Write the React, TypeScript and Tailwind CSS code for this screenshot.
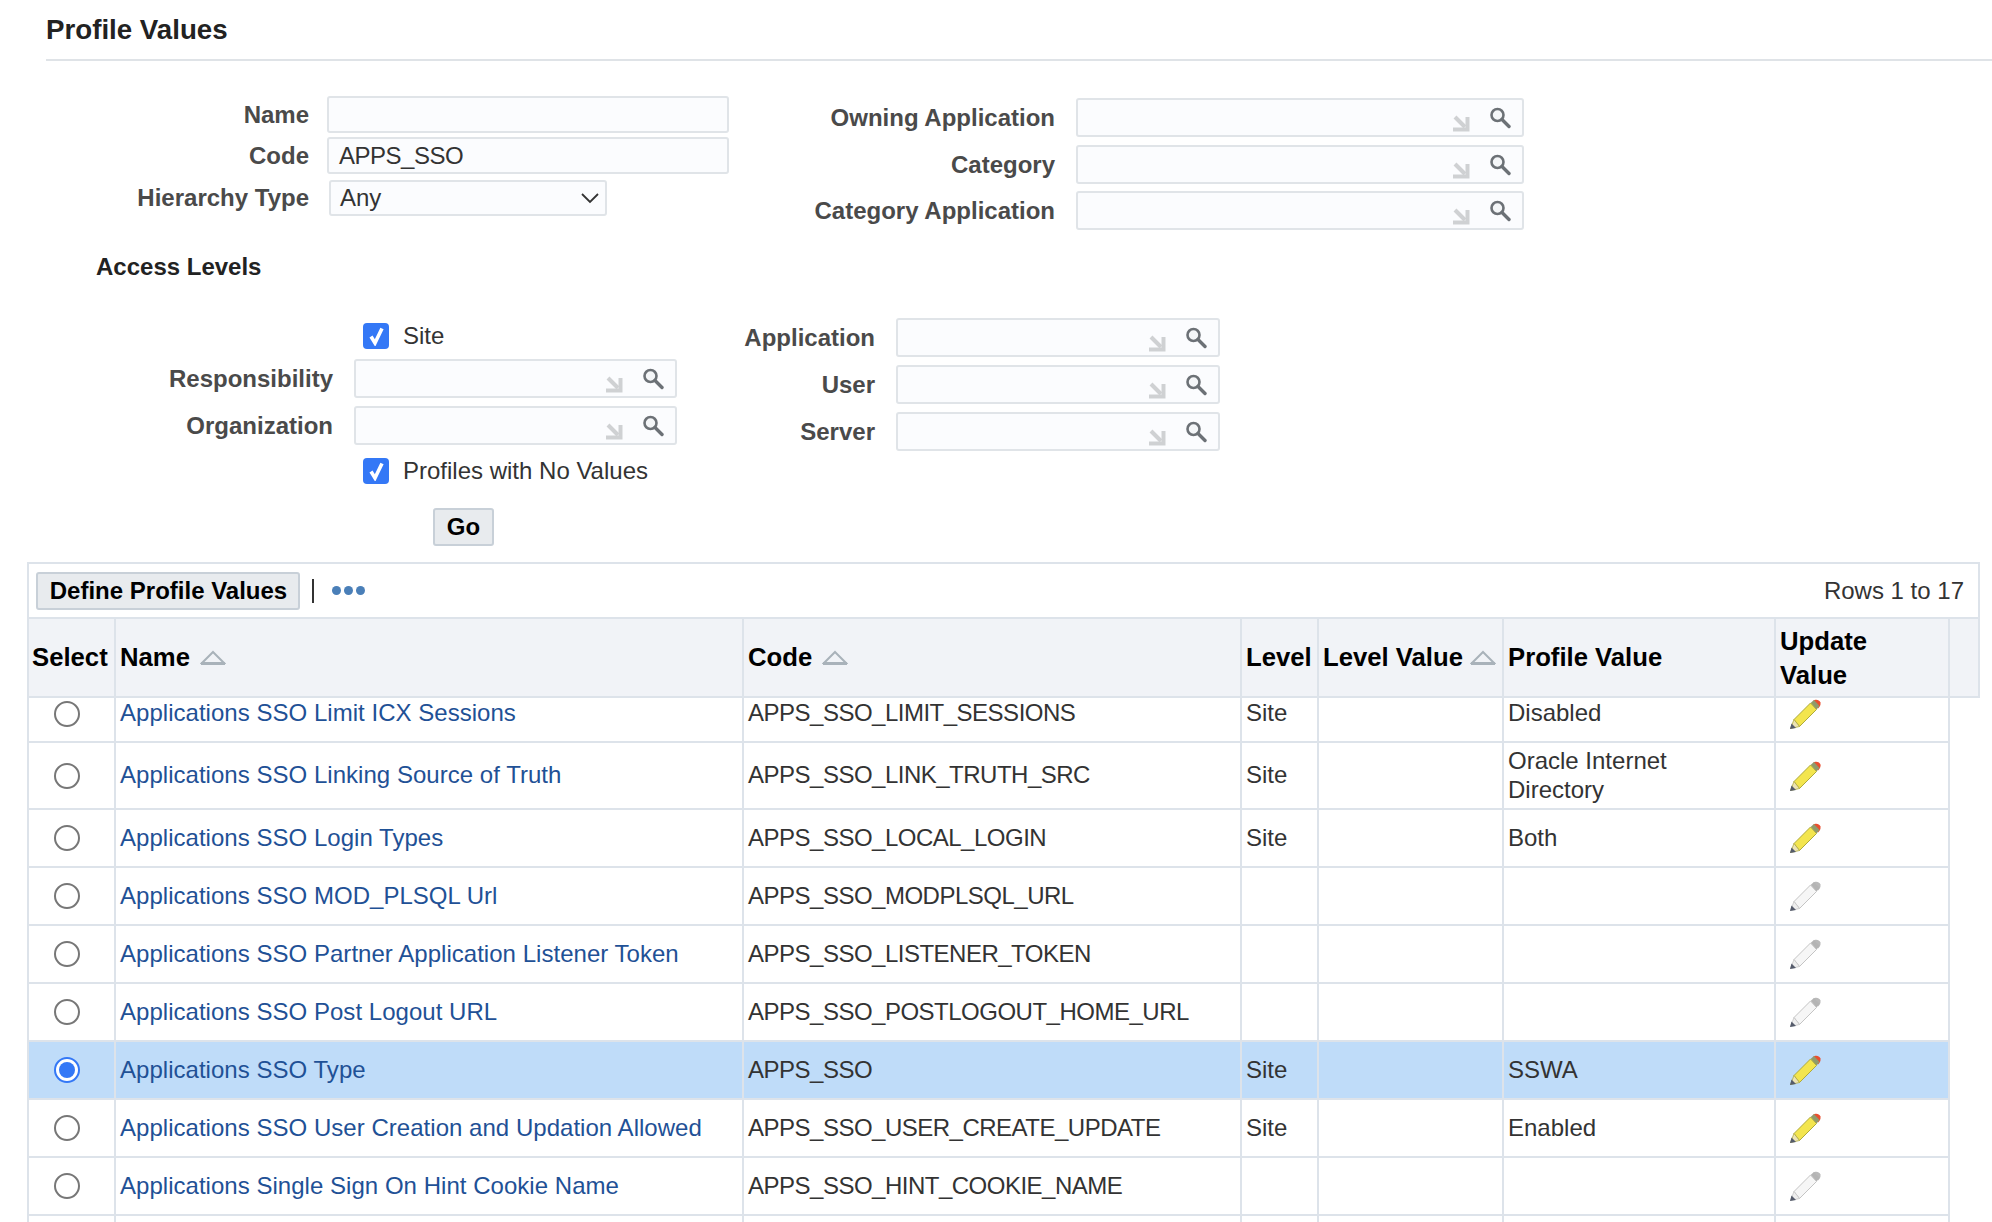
import * as React from "react";

const rows = [
  { name: "Applications SSO Limit ICX Sessions", code: "APPS_SSO_LIMIT_SESSIONS", level: "Site", value: "Disabled", active: true, h: "h-[45px]", shift: "pb-[15px]" },
  { name: "Applications SSO Linking Source of Truth", code: "APPS_SSO_LINK_TRUTH_SRC", level: "Site", value: "Oracle Internet Directory", active: true, h: "h-[67px]" },
  { name: "Applications SSO Login Types", code: "APPS_SSO_LOCAL_LOGIN", level: "Site", value: "Both", active: true, h: "h-[58px]" },
  { name: "Applications SSO MOD_PLSQL Url", code: "APPS_SSO_MODPLSQL_URL", level: "", value: "", active: false, h: "h-[58px]" },
  { name: "Applications SSO Partner Application Listener Token", code: "APPS_SSO_LISTENER_TOKEN", level: "", value: "", active: false, h: "h-[58px]" },
  { name: "Applications SSO Post Logout URL", code: "APPS_SSO_POSTLOGOUT_HOME_URL", level: "", value: "", active: false, h: "h-[58px]" },
  { name: "Applications SSO Type", code: "APPS_SSO", level: "Site", value: "SSWA", active: true, h: "h-[58px]", selected: true },
  { name: "Applications SSO User Creation and Updation Allowed", code: "APPS_SSO_USER_CREATE_UPDATE", level: "Site", value: "Enabled", active: true, h: "h-[58px]" },
  { name: "Applications Single Sign On Hint Cookie Name", code: "APPS_SSO_HINT_COOKIE_NAME", level: "", value: "", active: false, h: "h-[58px]" },
  { name: "", code: "", level: "", value: "", active: false, h: "h-[58px]", empty: true },
];

const gridCols = "grid grid-cols-[87px_628px_498px_77px_185px_272px_174px]";

function LovIcons() {
  return (
    <div className="absolute right-[11px] top-[7px] flex items-start gap-[18px]">
      <svg width="20" height="18" viewBox="0 0 20 18" className="mt-[7px]">
        <path d="M4 3 L14 13" stroke="#cfd1d3" strokeWidth="4" fill="none" />
        <path d="M2 15.5 H16.5 V3" stroke="#cfd1d3" strokeWidth="4" fill="none" />
      </svg>
      <svg width="22" height="22" viewBox="0 0 22 22">
        <circle cx="8.5" cy="8" r="6" stroke="#6c7176" strokeWidth="2.6" fill="#f4f6f8" />
        <path d="M13 12.5 L20 19.5" stroke="#6c7176" strokeWidth="3.4" strokeLinecap="round" />
      </svg>
    </div>
  );
}

function LovField({ label, labelWidth, width, mb }: { label: string; labelWidth: string; width: string; mb?: string }) {
  return (
    <div className={`flex items-center ${mb ?? ""}`}>
      <span className={`${labelWidth} shrink-0 text-right text-[24px] font-bold text-[#4a4a4a]`}>{label}</span>
      <div className={`relative ml-[21px] h-[39px] ${width} shrink-0 rounded-[3px] border-2 border-[#e0e4e8] bg-[#fbfcfe]`}>
        <LovIcons />
      </div>
    </div>
  );
}

function TextRow({ label, value, mb }: { label: string; value?: string; mb: string }) {
  return (
    <div className={`flex items-center ${mb}`}>
      <span className="w-[309px] shrink-0 text-right text-[24px] font-bold text-[#4a4a4a]">{label}</span>
      <div className="ml-[18px] flex h-[37px] w-[402px] items-center rounded-[3px] border-2 border-[#e0e4e8] bg-[#fbfcfe] pl-[10px] text-[24px] tracking-[-0.5px] text-[#333]">
        {value}
      </div>
    </div>
  );
}

function CheckRow({ label }: { label: string }) {
  return (
    <div className="ml-[363px] flex h-[26px] items-center">
      <span className="flex h-[26px] w-[26px] items-center justify-center rounded-[4px] bg-[#3478f6]">
        <svg width="17" height="20" viewBox="0 0 17 20">
          <path d="M3 10.5 L7 17 L14 2.5" stroke="#fff" strokeWidth="3.6" fill="none" />
        </svg>
      </span>
      <span className="ml-[14px] text-[24px] text-[#333]">{label}</span>
    </div>
  );
}

function Radio({ selected }: { selected?: boolean }) {
  return selected ? (
    <span className="ml-[25px] flex h-[26px] w-[26px] items-center justify-center rounded-full border-2 border-[#3478f6] bg-white">
      <span className="h-[16px] w-[16px] rounded-full bg-[#3478f6]" />
    </span>
  ) : (
    <span className="ml-[25px] block h-[26px] w-[26px] rounded-full border-2 border-[#777] bg-white" />
  );
}

function Pencil({ active }: { active: boolean }) {
  const body = active ? "#f3e54e" : "#f6f6f6";
  const edge = active ? "#aeaa3c" : "#c4c4c4";
  const band = active ? "#8f9a6c" : "#b4b4b4";
  const tip = active ? "#ece3b4" : "#eeeeee";
  const cap = active ? "#ea4f2f" : "#b9b9b9";
  return (
    <svg width="32" height="30" viewBox="0 0 32 30" className="ml-[13px] shrink-0">
      <path d="M24 2 C26 0 30 0 31.5 3.5 C32 6 30.5 8 29 9.5 Z" fill={cap} />
      <path d="M21.5 4 L25 1 L30.5 7 L27.5 10.5 Z" fill={band} />
      <path d="M5 20.5 L21.5 4 L27.5 10.5 L10.5 27.5 Z" fill={body} stroke={edge} strokeWidth="1" />
      <path d="M1.5 29.5 L5 20.5 L10.5 27.5 Z" fill={tip} stroke={edge} strokeWidth="0.8" />
      <path d="M1 30 L2.5 24.5 L7 29 Z" fill="#555b6b" />
    </svg>
  );
}

function SortTriangle({ gap }: { gap: string }) {
  return (
    <svg width="26" height="15" viewBox="0 0 26 15" className={`${gap} shrink-0`}>
      <path d="M13 2 L24 13 H2 Z" fill="none" stroke="#a9b2ba" strokeWidth="2" />
      <path d="M1 13.5 H25" stroke="#a9b2ba" strokeWidth="3" />
    </svg>
  );
}

function HeaderCell({ children, sortGap, className }: { children: React.ReactNode; sortGap?: string; className?: string }) {
  return (
    <div className={`flex items-center border-r-2 border-[#dde3ea] pl-[4px] text-[25.7px] font-bold text-black ${className ?? ""}`}>
      {children}
      {sortGap && <SortTriangle gap={sortGap} />}
    </div>
  );
}

function Cell({ children, link, selected, className }: { children?: React.ReactNode; link?: boolean; selected?: boolean; className?: string }) {
  return (
    <div className={`flex items-center border-r-2 border-[#dde3ea] pb-[2px] pl-[4px] text-[24px] leading-[29px] ${link ? "text-[#1f5196]" : "text-[#333]"} ${selected ? "bg-[#bfdcf9]" : ""} ${className ?? ""}`}>
      {children}
    </div>
  );
}

export default function App() {
  return (
    <div className="h-[1222px] w-[1992px] overflow-hidden bg-white font-['Liberation_Sans',Arial,sans-serif]">
      <div className="ml-[46px] flex h-[61px] items-center border-b-2 border-[#dfe3e7] pt-[1px] text-[27.7px] font-bold text-[#222]">
        Profile Values
      </div>

      <div className="flex pt-[35px]">
        <div className="w-[747px]">
          <TextRow label="Name" mb="mb-[4px]" />
          <TextRow label="Code" value="APPS_SSO" mb="mb-[6px]" />
          <div className="flex items-center">
            <span className="w-[309px] shrink-0 text-right text-[24px] font-bold text-[#4a4a4a]">Hierarchy Type</span>
            <div className="ml-[20px] flex h-[36px] w-[278px] items-center justify-between rounded-[3px] border-2 border-[#e0e4e8] bg-[#fbfcfe] pl-[9px] pr-[5px] text-[24px] text-[#333]">
              Any
              <svg width="20" height="12" viewBox="0 0 20 12">
                <path d="M2 2 L10 10 L18 2" stroke="#333" strokeWidth="1.8" fill="none" />
              </svg>
            </div>
          </div>
        </div>
        <div className="pt-[2px]">
          <LovField label="Owning Application" labelWidth="w-[308px]" width="w-[448px]" mb="mb-[8px]" />
          <LovField label="Category" labelWidth="w-[308px]" width="w-[448px]" mb="mb-[7px]" />
          <LovField label="Category Application" labelWidth="w-[308px]" width="w-[448px]" />
        </div>
      </div>

      <div className="ml-[96px] mt-[21px] text-[24px] font-bold leading-[32px] text-[#222]">Access Levels</div>

      <div className="mt-[35px] flex">
        <div className="w-[680px] pt-[5px]">
          <CheckRow label="Site" />
          <div className="mt-[10px]">
            <LovField label="Responsibility" labelWidth="w-[333px]" width="w-[323px]" mb="mb-[8px]" />
            <LovField label="Organization" labelWidth="w-[333px]" width="w-[323px]" mb="mb-[13px]" />
          </div>
          <CheckRow label="Profiles with No Values" />
        </div>
        <div>
          <LovField label="Application" labelWidth="w-[195px]" width="w-[324px]" mb="mb-[8px]" />
          <LovField label="User" labelWidth="w-[195px]" width="w-[324px]" mb="mb-[8px]" />
          <LovField label="Server" labelWidth="w-[195px]" width="w-[324px]" />
        </div>
      </div>

      <div className="ml-[433px] mt-[24px] flex h-[38px] w-[61px] items-center justify-center rounded-[3px] border-2 border-[#c8d0d8] bg-[#e8ebee] text-[24px] font-bold text-black">
        Go
      </div>

      <div className="ml-[27px] mt-[16px] w-[1953px]">
        <div className="flex h-[57px] items-center justify-between border-2 border-[#dde3ea] pl-[7px] pr-[14px]">
          <div className="flex items-center">
            <div className="flex h-[38px] w-[264px] items-center justify-center rounded-[3px] border-2 border-[#c8d0d8] bg-[#e8ebee] pl-[1px] text-[24px] font-bold text-black">
              Define Profile Values
            </div>
            <span className="ml-[12px] h-[24px] w-[2px] bg-[#333]" />
            <div className="ml-[18px] flex gap-[3px]">
              <span className="h-[9px] w-[9px] rounded-full bg-[#4a7fb8]" />
              <span className="h-[9px] w-[9px] rounded-full bg-[#4a7fb8]" />
              <span className="h-[9px] w-[9px] rounded-full bg-[#4a7fb8]" />
            </div>
          </div>
          <span className="text-[24px] text-[#333]">Rows 1 to 17</span>
        </div>

        <div className="flex h-[79px] border-b-2 border-l-2 border-r-2 border-[#dde3ea] bg-[#f1f3f7]">
          <div className={`${gridCols} h-full`}>
            <HeaderCell className="!pl-[3px]">Select</HeaderCell>
            <HeaderCell sortGap="ml-[10px]">Name</HeaderCell>
            <HeaderCell sortGap="ml-[10px]">Code</HeaderCell>
            <HeaderCell>Level</HeaderCell>
            <HeaderCell sortGap="ml-[7px]">Level Value</HeaderCell>
            <HeaderCell>Profile Value</HeaderCell>
            <HeaderCell className="leading-[34px]">
              Update
              <br />
              Value
            </HeaderCell>
          </div>
        </div>

        <div className="w-[1923px] border-l-2 border-[#dde3ea]">
          {rows.map((r, i) => (
            <div key={i} className={`${gridCols} ${r.h} border-b-2 border-[#dde3ea]`}>
              <div className={`flex items-center border-r-2 border-[#dde3ea] ${r.shift ?? ""} ${r.selected ? "bg-[#bfdcf9]" : ""}`}>
                {!r.empty && <Radio selected={r.selected} />}
              </div>
              <Cell link selected={r.selected}>
                <span className={`tracking-[0.03px] ${r.shift ?? ""}`}>{r.name}</span>
              </Cell>
              <Cell selected={r.selected}>
                <span className={`tracking-[-0.5px] ${r.shift ?? ""}`}>{r.code}</span>
              </Cell>
              <Cell selected={r.selected}>
                <span className={r.shift ?? ""}>{r.level}</span>
              </Cell>
              <Cell selected={r.selected} />
              <Cell selected={r.selected} className="pr-[60px]">
                <span className={r.shift ?? ""}>{r.value}</span>
              </Cell>
              <div className={`flex border-r-2 border-[#dde3ea] ${r.shift ? "items-start pt-px" : "items-center"} ${r.selected ? "bg-[#bfdcf9]" : ""}`}>
                {!r.empty && <Pencil active={r.active} />}
              </div>
            </div>
          ))}
        </div>
      </div>
    </div>
  );
}
